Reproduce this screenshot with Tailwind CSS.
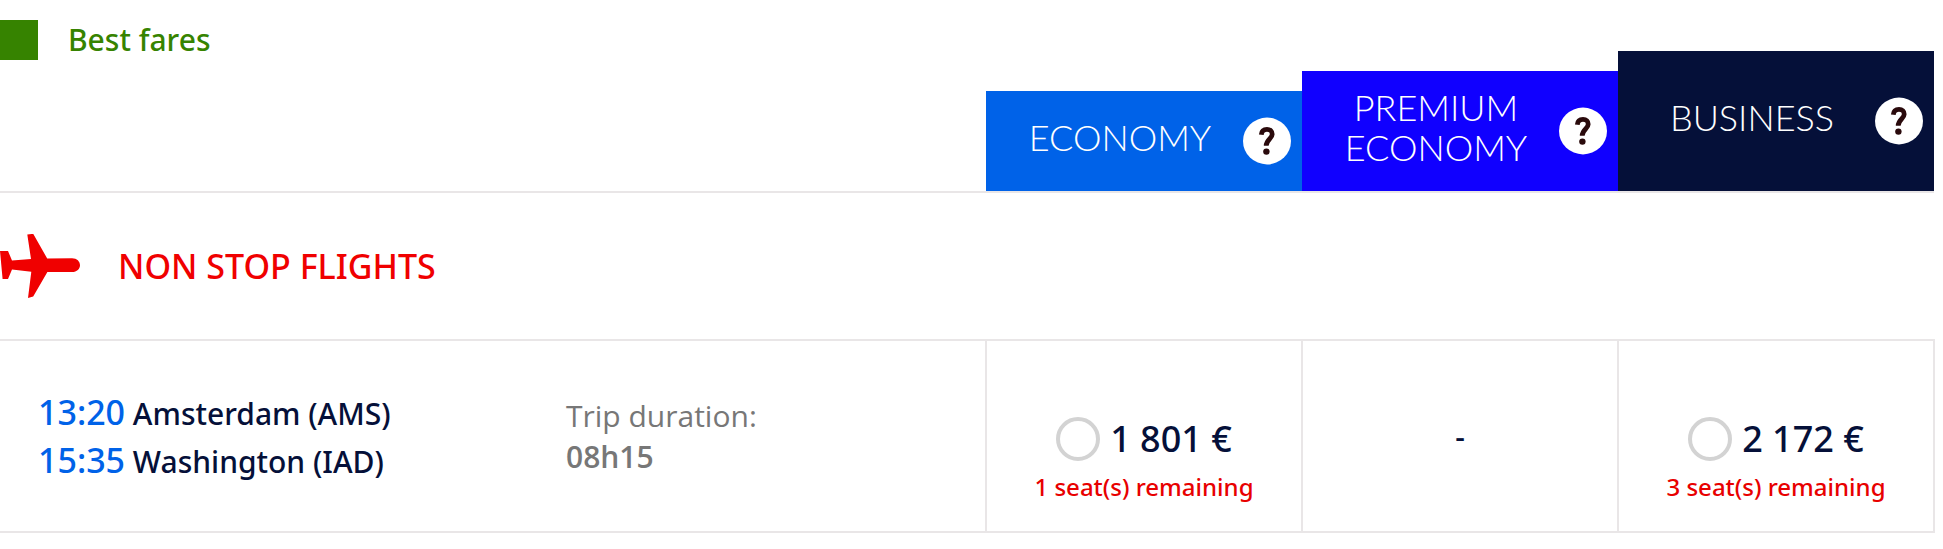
<!doctype html>
<html lang="en">
<head>
  <meta charset="UTF-8">
  <meta name="viewport" content="width=device-width, initial-scale=1.0">
  <title>Flight selection</title>
  <script src="https://cdn.jsdelivr.net/npm/@tailwindcss/browser@4"></script>
</head>
<body class="bg-white font-['Noto_Sans',sans-serif] text-[#051039]">
  <svg class="hidden">
    <symbol id="help" viewBox="0 0 48 48">
      <ellipse cx="24" cy="24" rx="24" ry="23.4" fill="#fff"/>
      <path d="M18.3 17.8C18.6 14.2 20.8 12.4 24 12.4c3.3 0 5.2 1.9 5.2 4.8 0 4.6-6 5.2-6 11.6" fill="none" stroke="#2a0a0c" stroke-width="4.8"/>
      <circle cx="23.4" cy="34.6" r="3.2" fill="#2a0a0c"/>
    </symbol>
  </svg>

  <div class="pt-5 pr-2">
    <table class="w-full table-fixed border-collapse">
      <colgroup>
        <col>
        <col class="w-[420px]">
        <col class="w-[316px]">
        <col class="w-[316px]">
        <col class="w-[316px]">
      </colgroup>
      <thead>
        <tr class="border-b-2 border-[#e9e6e7]">
          <!-- Legend -->
          <th colspan="2" class="p-0 align-top">
            <div class="flex items-center gap-[30px] text-[30px] leading-10 font-medium text-[#368300]">
              <span class="size-10 -ml-[2px] bg-[#368300]"></span>
              Best fares
            </div>
          </th>
          <!-- Cabin headings -->
          <th scope="col" class="p-0 align-bottom">
            <div class="flex h-[100px] items-center bg-[#0062e8] px-[11px] font-[Lato,sans-serif] text-[36px] leading-10 font-light text-white">
              <span class="flex-1 pb-2">ECONOMY</span>
              <button type="button" aria-label="About Economy" class="size-12 cursor-pointer"><svg class="size-12"><use href="#help"/></svg></button>
            </div>
          </th>
          <th scope="col" class="p-0 align-bottom">
            <div class="flex h-[120px] items-center bg-[#1000ff] px-[11px] font-[Lato,sans-serif] text-[36px] leading-10 font-light text-white">
              <span class="flex-1 pb-2">PREMIUM ECONOMY</span>
              <button type="button" aria-label="About Premium Economy" class="size-12 cursor-pointer"><svg class="size-12"><use href="#help"/></svg></button>
            </div>
          </th>
          <th scope="col" class="p-0 pt-[31px] align-bottom">
            <div class="flex h-[140px] items-center bg-[#051039] px-[11px] font-[Lato,sans-serif] text-[36px] leading-10 font-light text-white">
              <span class="flex-1 pb-2">BUSINESS</span>
              <button type="button" aria-label="About Business" class="size-12 cursor-pointer"><svg class="size-12"><use href="#help"/></svg></button>
            </div>
          </th>
        </tr>
      </thead>
      <tbody>
        <tr class="h-[148px] border-b-2 border-[#e9e6e7]">
          <th colspan="5" scope="rowgroup" class="p-0">
            <div class="flex items-center gap-[38px] text-[34px] leading-10 font-medium text-[#f00000]">
              <svg class="h-16 w-20" viewBox="0 14 80 64" fill="currentColor"><path d="M0 31H8L12 40.5L31 39L27.3 14.6L33.2 13.8L47.2 38.5L72 38.2C77 38.2 80 41.5 80 45.2S77 52 72 52H47.4L33.2 76.5L28 78L31.3 51.8L12 49.6L8 59H2.6Z"/></svg>
              NON STOP FLIGHTS
            </div>
          </th>
        </tr>
        <tr class="h-[192px] border-b-2 border-[#e9e6e7]">
          <td class="p-0 pt-[2px] pl-[38px] text-[30px] leading-[46px] font-medium">
            <p><span class="text-[34px] text-[#0062e8]">13:20</span> Amsterdam (AMS)</p>
            <p><span class="text-[34px] text-[#0062e8]">15:35</span> Washington (IAD)</p>
          </td>
          <td class="p-0 font-['Open_Sans',sans-serif] text-[30px] leading-[41px] text-[#777777]">
            <p class="font-normal">Trip duration:</p>
            <p class="font-semibold">08h15</p>
          </td>
          <td class="border-2 border-[#e9e6e7] p-0 pt-[54px] text-center font-medium">
            <label class="flex items-center justify-center gap-[10px] text-[36px] leading-12">
              <input type="radio" name="fare" value="economy" class="size-11 appearance-none rounded-full border-4 border-[#d3d3d3] checked:bg-[#0062e8]">
              1 801 €
            </label>
            <p class="text-[24px] leading-12 text-[#e80000]">1 seat(s) remaining</p>
          </td>
          <td class="border-2 border-[#e9e6e7] p-0 text-center text-[30px] font-medium">-</td>
          <td class="border-2 border-[#e9e6e7] p-0 pt-[54px] text-center font-medium">
            <label class="flex items-center justify-center gap-[10px] text-[36px] leading-12">
              <input type="radio" name="fare" value="business" class="size-11 appearance-none rounded-full border-4 border-[#d3d3d3] checked:bg-[#0062e8]">
              2 172 €
            </label>
            <p class="text-[24px] leading-12 text-[#e80000]">3 seat(s) remaining</p>
          </td>
        </tr>
      </tbody>
    </table>
  </div>
</body>
</html>
